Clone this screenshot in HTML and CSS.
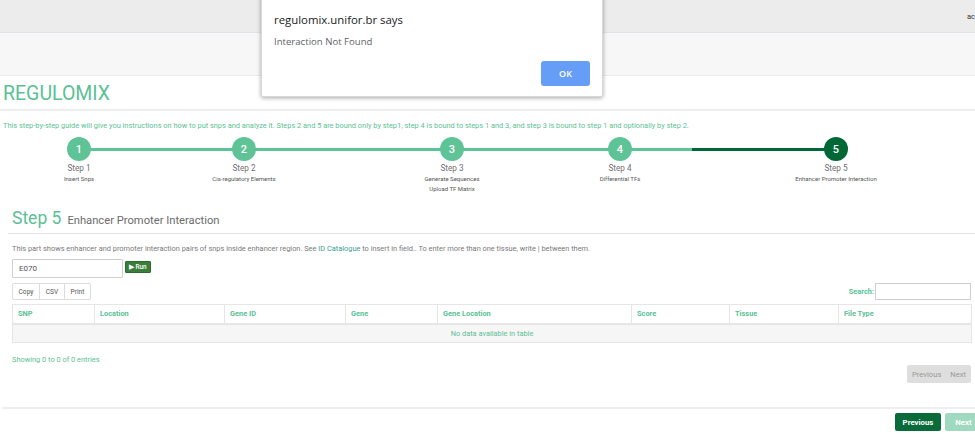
FILE: index.html
```html
<!DOCTYPE html>
<html lang="en">
<head>
<meta charset="utf-8">
<title>Regulomix</title>
<link rel="stylesheet" href="styles.css">
</head>
<body>
<header class="topbar"><span class="user">ac</span></header>
<div class="subbar"></div>
<main class="page">
  <h1 class="brand">REGULOMIX</h1>
  <p class="intro">This step-by-step guide will give you instructions on how to put snps and analyze it. Steps 2 and 5 are bound only by step1, step 4 is bound to steps 1 and 3, and step 3 is bound to step 1 and optionally by step 2.</p>
  <div class="stepper">
    <div class="track"></div>
    <div class="step s1"><span class="dot">1</span><span class="st">Step 1</span><span class="sub">Insert Snps</span></div>
    <div class="step s2"><span class="dot">2</span><span class="st">Step 2</span><span class="sub">Cis-regulatory Elements</span></div>
    <div class="step s3"><span class="dot">3</span><span class="st">Step 3</span><span class="sub">Generate Sequences</span><span class="sub">Upload TF Matrix</span></div>
    <div class="step s4"><span class="dot">4</span><span class="st">Step 4</span><span class="sub">Differential TFs</span></div>
    <div class="step s5 active"><span class="dot">5</span><span class="st">Step 5</span><span class="sub">Enhancer Promoter Interaction</span></div>
  </div>

  <section class="panel">
    <h2 class="panel-title"><span class="big">Step 5</span><span class="small">Enhancer Promoter Interaction</span></h2>
    <p class="desc">This part shows enhancer and promoter interaction pairs of snps inside enhancer region. See <a href="#" class="link">ID Catalogue</a> to insert in field.. To enter more than one tissue, write | between them.</p>
    <div class="query">
      <input class="field" type="text" value="E070">
      <button class="run" type="button"><span class="tri">&#9654;</span> Run</button>
    </div>
    <div class="tools">
      <div class="btn-group">
        <button type="button" class="tbtn">Copy</button><button type="button" class="tbtn">CSV</button><button type="button" class="tbtn">Print</button>
      </div>
      <label class="search">Search:<input type="text" class="search-input"></label>
    </div>
    <table class="grid">
      <colgroup>
        <col class="c1"><col class="c2"><col class="c3"><col class="c4"><col class="c5"><col class="c6"><col class="c7"><col class="c8">
      </colgroup>
      <thead>
        <tr><th>SNP</th><th>Location</th><th>Gene ID</th><th>Gene</th><th>Gene Location</th><th>Score</th><th>Tissue</th><th>File Type</th></tr>
      </thead>
      <tbody>
        <tr><td colspan="8" class="empty">No data available in table</td></tr>
      </tbody>
    </table>
    <div class="info">Showing 0 to 0 of 0 entries</div>
    <div class="paging"><span class="pg">Previous</span><span class="pg">Next</span></div>
  </section>

  <div class="wizard-footer">
    <button type="button" class="wbtn prev">Previous</button>
    <button type="button" class="wbtn next">Next</button>
  </div>
</main>

<div class="dialog" role="alertdialog">
  <div class="dlg-title">regulomix.unifor.br says</div>
  <div class="dlg-msg">Interaction Not Found</div>
  <div class="dlg-actions"><button type="button" class="ok">OK</button></div>
</div>
</body>
</html>
```

FILE: styles.css
```css
* { box-sizing: border-box; }
html, body { margin: 0; padding: 0; }
body {
  width: 975px;
  height: 445px;
  overflow: hidden;
  font-family: Roboto, "Liberation Sans", sans-serif;
  background: #fff;
  color: #555;
  position: relative;
}

.topbar {
  height: 33px;
  background: #ececec;
  border-bottom: 1px solid #dfe3e8;
  display: flex;
  justify-content: flex-end;
  align-items: center;
}
.user {
  font-size: 7.5px;
  color: #333;
  white-space: nowrap;
}
.subbar {
  height: 43px;
  background: #f7f7f7;
  border-bottom: 1px solid #ebebeb;
}

.page { padding: 0 0 0 3px; }

.brand {
  margin: 0 0 0 -3px;
  padding: 6px 0 3px 3px;
  font-size: 19.5px;
  line-height: 24px;
  font-weight: 400;
  color: #5cbf95;
  border-bottom: 2px solid #eeeeee;
}

.intro {
  margin: 10px 0 0;
  font-size: 7.4px;
  line-height: 10px;
  color: #5cbf95;
}

.stepper {
  display: grid;
  grid-template-columns: 155px 165px 208px 168px 340px;
  grid-template-rows: 24px auto;
  margin-top: 6px;
}
.track {
  grid-row: 1;
  grid-column: 1 / -1;
  align-self: center;
  height: 3px;
  margin: 0 0 0 76px;
  width: 757px;
  background: linear-gradient(to right, #5ec396 0 613px, #006837 613px 100%);
}
.step {
  grid-row: 1 / 3;
  display: flex;
  flex-direction: column;
  align-items: center;
  justify-self: start;
  width: 0;
  z-index: 1;
}
.s1 { grid-column: 1; margin-left: 76px; }
.s2 { grid-column: 2; margin-left: 86px; }
.s3 { grid-column: 3; margin-left: 129px; }
.s4 { grid-column: 4; margin-left: 89px; }
.s5 { grid-column: 5; margin-left: 137px; }
.step > span { white-space: nowrap; }
.dot {
  width: 24px;
  height: 24px;
  border-radius: 50%;
  background: #5ec396;
  color: #fff;
  font-size: 11px;
  font-weight: 500;
  display: flex;
  align-items: center;
  justify-content: center;
  flex: none;
}
.active .dot { background: #006837; }
.st {
  font-size: 8.2px;
  line-height: 10px;
  color: #707070;
  margin-top: 2px;
}
.sub {
  font-size: 6px;
  line-height: 10px;
  color: #555;
  margin-top: 1px;
}
.sub + .sub { margin-top: 0; }

.panel {
  padding: 0 4px 0 9px;
  margin-top: 13px;
}
.panel-title {
  margin: 0 -4px;
  padding: 0 0 4px 4px;
  font-weight: 400;
  border-bottom: 1px solid #e3e3e3;
  display: flex;
  align-items: baseline;
  gap: 6px;
}
.big { font-size: 17.5px; color: #5cbf95; line-height: 22px; }
.small { font-size: 11.2px; color: #6b6b6b; }

.desc {
  margin: 10px 0 0;
  font-size: 7.4px;
  line-height: 10px;
  color: #7a7a7a;
}
.link { color: #3a9e9a; text-decoration: none; }

.query {
  display: flex;
  align-items: flex-start;
  gap: 2px;
  margin-top: 5px;
}
.field {
  width: 111px;
  height: 19px;
  border: 1px solid #cfcfcf;
  border-radius: 1px;
  padding: 0 6px;
  font-family: Roboto, "Liberation Sans", sans-serif;
  font-size: 8px;
  font-weight: 400;
  color: #555;
  background: #fff;
}
.run {
  margin-top: 2px;
  height: 12px;
  width: 26px;
  padding: 0 2px;
  background: #3b7d3a;
  border: 1px solid #2f6b2e;
  border-radius: 1px;
  color: #fff;
  font-family: Roboto, "Liberation Sans", sans-serif;
  font-size: 6.4px;
  font-weight: 500;
  display: flex;
  align-items: center;
  justify-content: center;
  gap: 1px;
}
.tri { font-size: 7px; }

.tools {
  display: flex;
  justify-content: space-between;
  align-items: center;
  margin-top: 5px;
}
.btn-group { display: flex; }
.tbtn {
  height: 17px;
  padding: 0;
  background: #fff;
  border: 1px solid #dcdcdc;
  margin-left: -1px;
  font-family: Roboto, "Liberation Sans", sans-serif;
  font-size: 6.6px;
  color: #555;
}
.tbtn:first-child { margin-left: 0; border-radius: 2px 0 0 2px; width: 28px; }
.tbtn:nth-child(2) { width: 26px; }
.tbtn:last-child { border-radius: 0 2px 2px 0; width: 27px; }
.search {
  display: flex;
  align-items: center;
  font-size: 7.4px;
  font-weight: 700;
  color: #5cbf95;
}
.search-input {
  width: 96px;
  height: 17px;
  border: 1px solid #cfcfcf;
  margin-left: 1px;
  background: #fff;
}

.grid {
  width: 959px;
  margin-top: 4px;
  border-collapse: collapse;
  table-layout: fixed;
  font-size: 7.4px;
}
.c1 { width: 82px; } .c2 { width: 130px; } .c3 { width: 121px; } .c4 { width: 92px; }
.c5 { width: 194px; } .c6 { width: 98px; } .c7 { width: 109px; } .c8 { width: 133px; }
.grid th {
  height: 19px;
  text-align: left;
  padding: 0 5px;
  font-weight: 700;
  color: #5cbf95;
  border: 1px solid #e6e6e6;
  border-bottom-width: 2px;
  background: #fff;
}
.grid td {
  height: 19px;
  border: 1px solid #e6e6e6;
  background: #f6f6f6;
}
.grid .empty { text-align: center; color: #5cbf95; }

.info {
  margin-top: 12px;
  font-size: 7.4px;
  color: #5cbf95;
}
.paging {
  display: flex;
  align-items: center;
  margin: 1px 0 0 auto;
  width: max-content;
  height: 18px;
  padding: 0 5px;
  gap: 9px;
  background: #dedede;
  border-radius: 2px;
}
.pg { font-size: 7.6px; color: #999; }

.wizard-footer {
  display: flex;
  justify-content: flex-end;
  gap: 4px;
  margin: 24px -30px 0 0;
  border-top: 2px solid #eeeeee;
  padding-top: 4px;
}
.wbtn {
  height: 18px;
  border: none;
  border-radius: 2px;
  color: #fff;
  font-family: Roboto, "Liberation Sans", sans-serif;
  font-size: 7.8px;
  font-weight: 700;
}
.wbtn.prev { background: #0a6b3a; width: 46px; }
.wbtn.next { background: #9fd9bf; width: 60px; padding-right: 29px; }

.dialog {
  position: absolute;
  left: 261px;
  top: -5px;
  width: 342px;
  height: 102px;
  background: #fff;
  border: 1px solid #d8d8d8;
  border-radius: 0 0 2px 2px;
  box-shadow: 0 1px 4px rgba(0,0,0,0.35);
  padding: 17px 12px 0;
  font-family: "Open Sans", "Noto Sans", sans-serif;
}
.dlg-title { font-size: 11.4px; color: #202124; line-height: 14px; }
.dlg-msg { font-size: 9.6px; color: #5f6368; margin-top: 9px; line-height: 12px; }
.dlg-actions { display: flex; justify-content: flex-end; margin-top: 13px; }
.ok {
  width: 49px;
  height: 25px;
  border: none;
  border-radius: 3px;
  background: #669df6;
  color: #fff;
  font-family: "Open Sans", "Noto Sans", sans-serif;
  font-size: 9px;
  font-weight: 600;
}
```
